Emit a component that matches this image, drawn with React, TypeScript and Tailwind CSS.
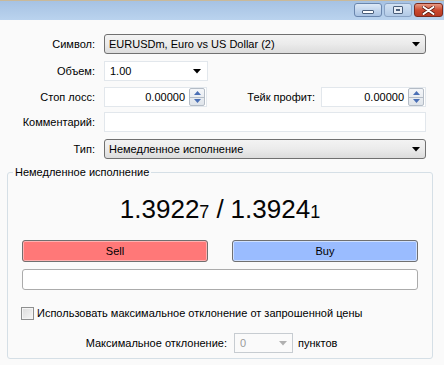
import React from "react";

const Arrow = ({ color = "#000" }: { color?: string }) => (
  <svg width="8" height="5" viewBox="0 0 8 5">
    <path d="M0 0 H8 L4 4.5 Z" fill={color} />
  </svg>
);

const Spinner = () => (
  <div className="flex flex-col w-[16px] h-[18px] mr-[1px] border border-[#b4bcc6] rounded-[2px] bg-gradient-to-b from-[#f4f6f9] to-[#dfe4ea]">
    <div className="flex-1 flex items-center justify-center border-b border-[#b4bcc6]">
      <svg width="7" height="4" viewBox="0 0 7 4"><path d="M0 4 H7 L3.5 0 Z" fill="#4a6fb5" /></svg>
    </div>
    <div className="flex-1 flex items-center justify-center">
      <svg width="7" height="4" viewBox="0 0 7 4"><path d="M0 0 H7 L3.5 4 Z" fill="#4a6fb5" /></svg>
    </div>
  </div>
);

const Label = ({ children }: { children: React.ReactNode }) => (
  <div className="w-[95px] text-right shrink-0">{children}</div>
);

export default function App() {
  return (
    <div
      className="w-[444px] h-[365px] bg-[#fafafa] text-[11px] text-black overflow-hidden flex flex-col"
      style={{ fontFamily: '"Liberation Sans", Arial, sans-serif' }}
    >
      {/* Title bar */}
      <div className="h-[20px] shrink-0 bg-gradient-to-b from-[#a6c2e3] to-[#bad3ee] border-t border-[#c9b99a] flex items-start justify-end pt-[2px] pr-[1px] gap-[2px]">
        <div className="w-[28px] h-[14px] rounded-[3px] border border-[#6a86ad] bg-gradient-to-b from-[#dde9f7] to-[#a9c3e3] flex items-end justify-center pb-[2px]">
          <div className="w-[12px] h-[4px] bg-white border border-[#4a5e7a] rounded-[1px]" />
        </div>
        <div className="w-[28px] h-[14px] rounded-[3px] border border-[#8aa3c4] bg-gradient-to-b from-[#d3e2f3] to-[#b2cae6] flex items-center justify-center">
          <div className="w-[10px] h-[8px] border border-[#4a5e7a] rounded-[1px] bg-[#e8eef6] flex items-center justify-center">
            <div className="w-[4px] h-[2px] border border-[#4a5e7a]" />
          </div>
        </div>
        <div className="w-[29px] h-[14px] rounded-[3px] border border-[#7a2a1e] bg-gradient-to-b from-[#e69a85] via-[#cc4a30] to-[#b83a24] flex items-center justify-center">
          <svg width="13" height="9" viewBox="0 0 13 9">
            <path d="M1.5 1 L11.5 8 M11.5 1 L1.5 8" stroke="#5a1a10" strokeWidth="3.4" strokeLinecap="round" />
            <path d="M1.5 1 L11.5 8 M11.5 1 L1.5 8" stroke="#ffffff" strokeWidth="2" strokeLinecap="round" />
          </svg>
        </div>
      </div>

      {/* Form */}
      <div className="flex flex-col pt-[14px] pr-[18px]">
        <div className="flex items-center h-[20px]">
          <Label>Символ:</Label>
          <div className="ml-[9px] flex-1 h-[20px] border border-[#707070] rounded-[3px] bg-gradient-to-b from-[#f3f3f3] via-[#ebebeb] to-[#dcdcdc] flex items-center pl-[4px] pr-[5px]">
            <span className="flex-1">EURUSDm, Euro vs US Dollar (2)</span>
            <Arrow />
          </div>
        </div>

        <div className="flex items-center h-[20px] mt-[7px]">
          <Label>Объем:</Label>
          <div className="ml-[9px] w-[104px] h-[20px] border border-[#e2e7ec] bg-white flex items-center pl-[5px] pr-[6px]">
            <span className="flex-1">1.00</span>
            <Arrow />
          </div>
        </div>

        <div className="flex items-center h-[20px] mt-[6px]">
          <Label>Стоп лосс:</Label>
          <div className="ml-[9px] w-[103px] h-[20px] border border-[#e2e7ec] bg-white flex items-center">
            <span className="flex-1 text-right pr-[4px]">0.00000</span>
            <Spinner />
          </div>
          <div className="flex-1 text-right pr-[6px]">Тейк профит:</div>
          <div className="w-[105px] h-[20px] border border-[#e2e7ec] bg-white flex items-center">
            <span className="flex-1 text-right pr-[4px]">0.00000</span>
            <Spinner />
          </div>
        </div>

        <div className="flex items-center h-[20px] mt-[5px]">
          <Label>Комментарий:</Label>
          <div className="ml-[9px] flex-1 h-[20px] border border-[#e2e7ec] bg-white" />
        </div>

        <div className="flex items-center h-[20px] mt-[7px]">
          <Label>Тип:</Label>
          <div className="ml-[9px] flex-1 h-[20px] border border-[#707070] rounded-[3px] bg-gradient-to-b from-[#f3f3f3] via-[#ebebeb] to-[#dcdcdc] flex items-center pl-[4px] pr-[5px]">
            <span className="flex-1">Немедленное исполнение</span>
            <Arrow />
          </div>
        </div>
      </div>

      {/* Group */}
      <fieldset className="mt-[6px] ml-[7px] w-[426px] h-[194px] border border-[#d5dfe6] rounded-[3px] px-[14px]">
        <legend className="ml-[-9px] px-[2px] leading-[14px]">Немедленное исполнение</legend>
        <div className="flex flex-col">
          <div className="mt-[15px] h-[30px] flex items-baseline justify-center text-[26px] leading-[30px] text-[#050505]">
            <span>1.3922</span>
            <span className="text-[18px]">7</span>
            <span className="mx-[7px]">/</span>
            <span>1.3924</span>
            <span className="text-[18px]">1</span>
          </div>

          <div className="mt-[16px] flex justify-between">
            <div className="w-[186px] h-[22px] border border-[#707070] rounded-[3px] bg-[#ff7878] shadow-[inset_0_0_0_1px_#ffb0b0] flex items-center justify-center">
              Sell
            </div>
            <div className="w-[186px] h-[22px] border border-[#707070] rounded-[3px] bg-[#9abcff] shadow-[inset_0_0_0_1px_#cfe0ff] flex items-center justify-center">
              Buy
            </div>
          </div>

          <div className="mt-[7px] h-[21px] border border-[#ababab] rounded-[3px] bg-white" />

          <div className="mt-[15px] flex items-center h-[16px] -ml-[1px]">
            <div className="w-[13px] h-[13px] border border-[#8e8f8f] bg-gradient-to-br from-[#dcdcdc] to-[#f6f6f6] shadow-[inset_0_0_0_1px_#f4f4f4]" />
            <span className="ml-[3px]">Использовать максимальное отклонение от запрошенной цены</span>
          </div>

          <div className="mt-[12px] flex items-center h-[20px]">
            <div className="w-[205px] text-right">Максимальное отклонение:</div>
            <div className="ml-[7px] w-[59px] h-[20px] border border-[#c7ccd1] bg-[#fafafa] flex items-center pl-[5px] pr-[5px] text-[#9a9a9a]">
              <span className="flex-1">0</span>
              <Arrow color="#b0b0b0" />
            </div>
            <span className="ml-[5px]">пунктов</span>
          </div>
        </div>
      </fieldset>
    </div>
  );
}
